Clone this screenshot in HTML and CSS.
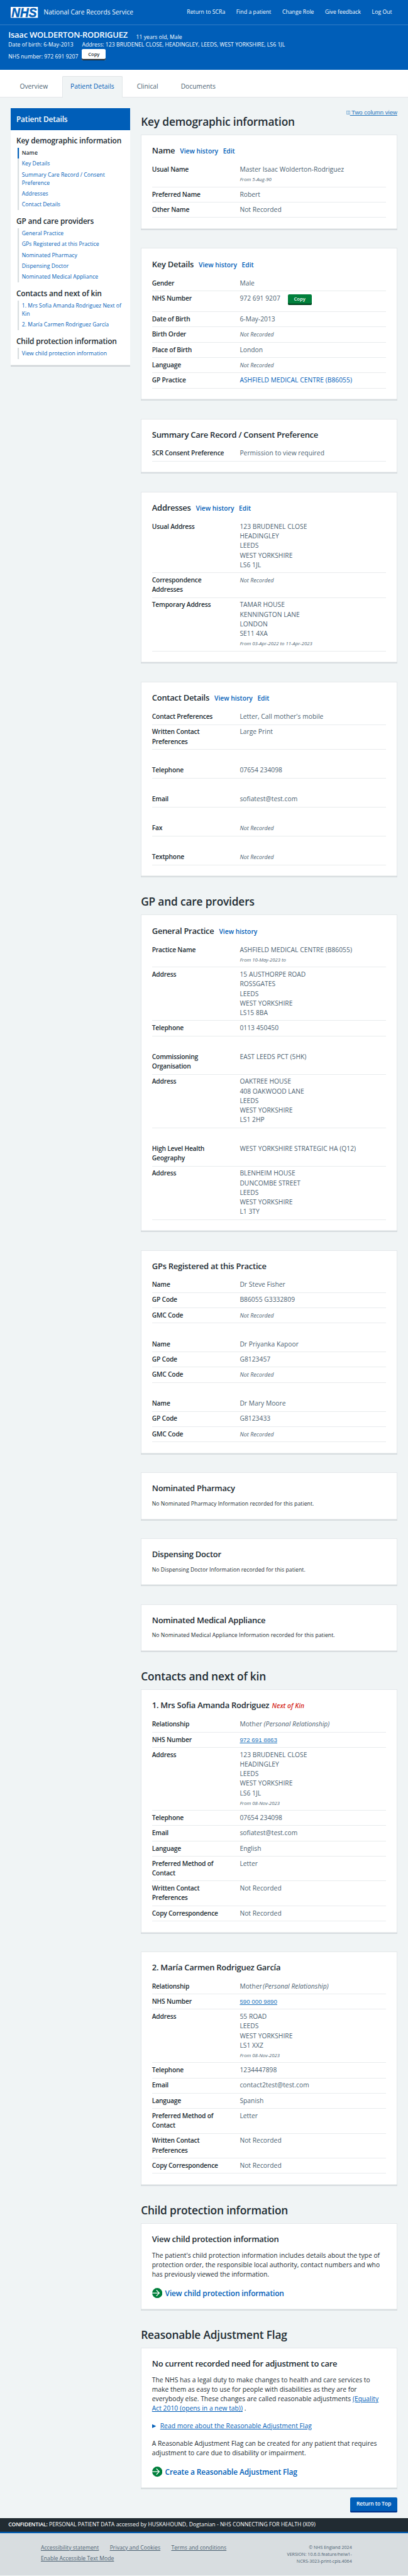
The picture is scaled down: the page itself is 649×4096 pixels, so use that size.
FILE: index.html
```html
<!DOCTYPE html>
<html lang="en">
<head>
<meta charset="utf-8">
<title>Patient Details - National Care Records Service</title>
<link rel="stylesheet" href="styles.css">
</head>
<body>
<header class="banner">
  <div class="service">
    <svg class="logo" viewBox="0 0 80 32" role="img" aria-label="NHS"><rect width="80" height="32" fill="#fff"/><text x="2.5" y="29.3" textLength="74" lengthAdjust="spacingAndGlyphs" class="logo-text">NHS</text></svg>
    <span class="service-name">National Care Records Service</span>
    <nav class="service-nav">
      <a>Return to SCRa</a><a>Find a patient</a><a>Change Role</a><a>Give feedback</a><a>Log Out</a>
    </nav>
  </div>
  <div class="patient">
    <div class="patient-title"><span class="patient-name">Isaac WOLDERTON-RODRIGUEZ</span><span class="patient-age">11 years old, Male</span></div>
    <div class="patient-grid">
      <span>Date of birth: 6-May-2013</span><span>Address: 123 BRUDENEL CLOSE, HEADINGLEY, LEEDS, WEST YORKSHIRE, LS6 1JL</span>
      <span class="patient-nhs">NHS number: 972 691 9207</span><button class="btn btn-white">Copy</button>
    </div>
  </div>
</header>
<nav class="tabs">
  <a class="tab">Overview</a><a class="tab tab-active">Patient Details</a><a class="tab">Clinical</a><a class="tab">Documents</a>
</nav>
<div class="layout">
  <aside class="side">
    <div class="side-head">Patient Details</div>
    <h3 class="side-title">Key demographic information</h3>
    <ul class="side-list">
      <li class="current">Name</li>
      <li>Key Details</li>
      <li>Summary Care Record / Consent<br>Preference</li>
      <li>Addresses</li>
      <li>Contact Details</li>
    </ul>
    <h3 class="side-title">GP and care providers</h3>
    <ul class="side-list">
      <li>General Practice</li>
      <li>GPs Registered at this Practice</li>
      <li>Nominated Pharmacy</li>
      <li>Dispensing Doctor</li>
      <li>Nominated Medical Appliance</li>
    </ul>
    <h3 class="side-title">Contacts and next of kin</h3>
    <ul class="side-list">
      <li>1. Mrs Sofia Amanda Rodriguez Next of<br>Kin</li>
      <li>2. María Carmen Rodriguez García</li>
    </ul>
    <h3 class="side-title">Child protection information</h3>
    <ul class="side-list">
      <li>View child protection information</li>
    </ul>
  </aside>
  <main class="main">
    <div class="section-head first">
      <h2>Key demographic information</h2>
      <a class="view-link"><svg class="view-icon" viewBox="0 0 11 11"><path d="M.6.6h9.8v9.8H.6zM5.5.6v9.8" fill="none" stroke="#2073bc" stroke-width="1"/></svg> Two column view</a>
    </div>

    <section class="card">
      <h3 class="card-title">Name <a>View history</a><a>Edit</a></h3>
      <dl class="rows">
        <div><dt>Usual Name</dt><dd>Master Isaac Wolderton-Rodriguez<br><small>From 5-Aug-90</small></dd></div>
        <div><dt>Preferred Name</dt><dd>Robert</dd></div>
        <div><dt>Other Name</dt><dd>Not Recorded</dd></div>
      </dl>
    </section>

    <section class="card">
      <h3 class="card-title">Key Details <a>View history</a><a>Edit</a></h3>
      <dl class="rows">
        <div><dt>Gender</dt><dd>Male</dd></div>
        <div class="row-copy"><dt>NHS Number</dt><dd>972 691 9207 <button class="btn btn-green">Copy</button></dd></div>
        <div><dt>Date of Birth</dt><dd>6-May-2013</dd></div>
        <div><dt>Birth Order</dt><dd><i>Not Recorded</i></dd></div>
        <div><dt>Place of Birth</dt><dd>London</dd></div>
        <div><dt>Language</dt><dd><i>Not Recorded</i></dd></div>
        <div><dt>GP Practice</dt><dd><a class="plain">ASHFIELD MEDICAL CENTRE (B86055)</a></dd></div>
      </dl>
    </section>

    <section class="card">
      <h3 class="card-title">Summary Care Record / Consent Preference</h3>
      <dl class="rows">
        <div><dt>SCR Consent Preference</dt><dd>Permission to view required</dd></div>
      </dl>
    </section>

    <section class="card">
      <h3 class="card-title">Addresses <a>View history</a><a>Edit</a></h3>
      <dl class="rows">
        <div><dt>Usual Address</dt><dd>123 BRUDENEL CLOSE<br>HEADINGLEY<br>LEEDS<br>WEST YORKSHIRE<br>LS6 1JL</dd></div>
        <div><dt>Correspondence Addresses</dt><dd><i>Not Recorded</i></dd></div>
        <div><dt>Temporary Address</dt><dd>TAMAR HOUSE<br>KENNINGTON LANE<br>LONDON<br>SE11 4XA<br><small>From 03-Apr-2022 to 11-Apr-2023</small></dd></div>
      </dl>
    </section>

    <section class="card">
      <h3 class="card-title">Contact Details <a>View history</a><a>Edit</a></h3>
      <dl class="rows">
        <div><dt>Contact Preferences</dt><dd>Letter, Call mother's mobile</dd></div>
        <div><dt>Written Contact Preferences</dt><dd>Large Print</dd></div>
      </dl>
      <dl class="rows"><div><dt>Telephone</dt><dd>07654 234098</dd></div></dl>
      <dl class="rows"><div><dt>Email</dt><dd>sofiatest@test.com</dd></div></dl>
      <dl class="rows"><div><dt>Fax</dt><dd><i>Not Recorded</i></dd></div></dl>
      <dl class="rows"><div><dt>Textphone</dt><dd><i>Not Recorded</i></dd></div></dl>
    </section>

    <div class="section-head"><h2>GP and care providers</h2></div>

    <section class="card">
      <h3 class="card-title">General Practice <a>View history</a></h3>
      <dl class="rows">
        <div><dt>Practice Name</dt><dd>ASHFIELD MEDICAL CENTRE (B86055)<br><small>From 10-May-2023 to</small></dd></div>
        <div><dt>Address</dt><dd>15 AUSTHORPE ROAD<br>ROSSGATES<br>LEEDS<br>WEST YORKSHIRE<br>LS15 8BA</dd></div>
        <div><dt>Telephone</dt><dd>0113 450450</dd></div>
      </dl>
      <dl class="rows">
        <div><dt>Commissioning Organisation</dt><dd>EAST LEEDS PCT (5HK)</dd></div>
        <div><dt>Address</dt><dd>OAKTREE HOUSE<br>408 OAKWOOD LANE<br>LEEDS<br>WEST YORKSHIRE<br>LS1 2HP</dd></div>
      </dl>
      <dl class="rows">
        <div><dt>High Level Health Geography</dt><dd>WEST YORKSHIRE STRATEGIC HA (Q12)</dd></div>
        <div><dt>Address</dt><dd>BLENHEIM HOUSE<br>DUNCOMBE STREET<br>LEEDS<br>WEST YORKSHIRE<br>L1 3TY</dd></div>
      </dl>
    </section>

    <section class="card">
      <h3 class="card-title">GPs Registered at this Practice</h3>
      <dl class="rows">
        <div><dt>Name</dt><dd>Dr Steve Fisher</dd></div>
        <div><dt>GP Code</dt><dd>B86055 G3332809</dd></div>
        <div><dt>GMC Code</dt><dd><i>Not Recorded</i></dd></div>
      </dl>
      <dl class="rows">
        <div><dt>Name</dt><dd>Dr Priyanka Kapoor</dd></div>
        <div><dt>GP Code</dt><dd>G8123457</dd></div>
        <div><dt>GMC Code</dt><dd><i>Not Recorded</i></dd></div>
      </dl>
      <dl class="rows">
        <div><dt>Name</dt><dd>Dr Mary Moore</dd></div>
        <div><dt>GP Code</dt><dd>G8123433</dd></div>
        <div><dt>GMC Code</dt><dd><i>Not Recorded</i></dd></div>
      </dl>
    </section>

    <section class="card">
      <h3 class="card-title">Nominated Pharmacy</h3>
      <p class="note">No Nominated Pharmacy Information recorded for this patient.</p>
    </section>
    <section class="card">
      <h3 class="card-title">Dispensing Doctor</h3>
      <p class="note">No Dispensing Doctor Information recorded for this patient.</p>
    </section>
    <section class="card">
      <h3 class="card-title">Nominated Medical Appliance</h3>
      <p class="note">No Nominated Medical Appliance Information recorded for this patient.</p>
    </section>

    <div class="section-head"><h2>Contacts and next of kin</h2></div>

    <section class="card">
      <h3 class="card-title">1. Mrs Sofia Amanda Rodriguez <em>Next of Kin</em></h3>
      <dl class="rows">
        <div><dt>Relationship</dt><dd>Mother <i class="big">(Personal Relationship)</i></dd></div>
        <div><dt>NHS Number</dt><dd><a class="number">972 691 8863</a></dd></div>
        <div><dt>Address</dt><dd>123 BRUDENEL CLOSE<br>HEADINGLEY<br>LEEDS<br>WEST YORKSHIRE<br>LS6 1JL<br><small>From 08-Nov-2023</small></dd></div>
        <div><dt>Telephone</dt><dd>07654 234098</dd></div>
        <div><dt>Email</dt><dd>sofiatest@test.com</dd></div>
        <div><dt>Language</dt><dd>English</dd></div>
        <div><dt>Preferred Method of Contact</dt><dd>Letter</dd></div>
        <div><dt>Written Contact Preferences</dt><dd>Not Recorded</dd></div>
        <div><dt>Copy Correspondence</dt><dd>Not Recorded</dd></div>
      </dl>
    </section>

    <section class="card">
      <h3 class="card-title">2. María Carmen Rodriguez García</h3>
      <dl class="rows">
        <div><dt>Relationship</dt><dd>Mother<i class="big close">(Personal Relationship)</i></dd></div>
        <div><dt>NHS Number</dt><dd><a class="number">590 000 9890</a></dd></div>
        <div><dt>Address</dt><dd>55 ROAD<br>LEEDS<br>WEST YORKSHIRE<br>LS1 XXZ<br><small>From 08-Nov-2023</small></dd></div>
        <div><dt>Telephone</dt><dd>1234447898</dd></div>
        <div><dt>Email</dt><dd>contact2test@test.com</dd></div>
        <div><dt>Language</dt><dd>Spanish</dd></div>
        <div><dt>Preferred Method of Contact</dt><dd>Letter</dd></div>
        <div><dt>Written Contact Preferences</dt><dd>Not Recorded</dd></div>
        <div><dt>Copy Correspondence</dt><dd>Not Recorded</dd></div>
      </dl>
    </section>

    <div class="section-head"><h2>Child protection information</h2></div>

    <section class="card">
      <h3 class="card-title">View child protection information</h3>
      <p class="text">The patient's child protection information includes details about the type of<br>protection order, the responsible local authority, contact numbers and who<br>has previously viewed the information.</p>
      <a class="action"><svg class="arrow" viewBox="0 0 30 30"><circle cx="15" cy="15" r="15" fill="#007f3b"/><path d="M0 15h21M12.500 6.500l8.500 8.500l-8.500 8.500" fill="none" stroke="#fff" stroke-width="2.300"/></svg>View child protection information</a>
    </section>

    <div class="section-head"><h2>Reasonable Adjustment Flag</h2></div>

    <section class="card">
      <h3 class="card-title">No current recorded need for adjustment to care</h3>
      <p class="text">The NHS has a legal duty to make changes to health and care services to<br>make them as easy to use for people with disabilities as they are for<br>everybody else. These changes are called reasonable adjustments <a>(Equality<br>Act 2010 (opens in a new tab))</a> .</p>
      <div class="more"><svg class="triangle" viewBox="0 0 12 14"><path d="M0 1.500v11l12-5.500z" fill="#005eb8"/></svg><a>Read more about the Reasonable Adjustment Flag</a></div>
      <p class="text">A Reasonable Adjustment Flag can be created for any patient that requires<br>adjustment to care due to disability or impairment.</p>
      <a class="action"><svg class="arrow" viewBox="0 0 30 30"><circle cx="15" cy="15" r="15" fill="#007f3b"/><path d="M0 15h21M12.500 6.500l8.500 8.500l-8.500 8.500" fill="none" stroke="#fff" stroke-width="2.300"/></svg>Create a Reasonable Adjustment Flag</a>
    </section>

    <button class="btn btn-top">Return to Top</button>
  </main>
</div>
<div class="confidential"><b>CONFIDENTIAL:</b> PERSONAL PATIENT DATA accessed by HUSKAHOUND, Dogtanian - NHS CONNECTING FOR HEALTH (X09)</div>
<footer class="footer">
  <div class="footer-links">
    <a>Accessibility statement</a><a>Privacy and Cookies</a><a>Terms and conditions</a><a>Enable Accessible Text Mode</a>
  </div>
  <div class="footer-meta">© NHS England 2024<br>VERSION: 10.6.0.feature/heiw1-<br>NCRS-3023-print-cpis.4064</div>
</footer>
</body>
</html>
```
FILE: styles.css
```css
html { font-size: 5.412px; }
* { box-sizing: border-box; margin: 0; padding: 0; }
body {
  font-family: "Open Sans", "Noto Sans", sans-serif;
  font-size: 1.9rem;
  line-height: 2.8rem;
  letter-spacing: .003em;
  color: #212b32;
  background: #f0f4f5;
}
ul { list-style: none; }
button { font-family: inherit; border: 0; }

/* Header */
.banner { height: 20.6rem; background: #005eb8; color: #fff; }
.service {
  display: flex;
  align-items: center;
  height: 7.3rem;
  padding: 0 4.7rem 0 3.2rem;
  box-shadow: inset 0 -1px rgba(255, 255, 255, .2);
}
.logo { width: 8rem; height: 3.2rem; flex: none; overflow: visible; }
.logo-text {
  font: italic bold 36.500px "Liberation Sans", Arial, sans-serif;
  letter-spacing: 0;
  fill: #005eb8;
  stroke: #005eb8;
  stroke-width: 1;
}
.service-name { margin-left: 1.65rem; font-size: 1.88rem; white-space: nowrap; }
.service-nav {
  display: flex;
  gap: 3.25rem;
  margin-left: auto;
  font-size: 1.6rem;
  white-space: nowrap;
}
.patient { padding: 1.47rem 2.45rem 0; font-size: 1.6rem; line-height: 2.4rem; white-space: nowrap; }
.patient-title { display: flex; gap: 2.5rem; height: 3.2rem; margin-bottom: .11rem; }
.patient-name { font-size: 2.4rem; line-height: 3.2rem; font-weight: 600; letter-spacing: -.018em; }
.patient-age { padding-top: .96rem; }
.patient-grid { display: grid; grid-template-columns: 21.65rem 1fr; }
.patient-nhs { padding-top: 1.03rem; }

.btn {
  display: block;
  height: 3.1rem;
  width: 7rem;
  border-radius: .4rem;
  color: #fff;
  font-size: 1.4rem;
  font-weight: 600;
  line-height: 2.7rem;
  padding-bottom: .4rem;
  text-align: center;
}
.btn-white { height: 3.2rem; color: #212b32; background: #fff; box-shadow: inset 0 -.4rem #212b32; }
.btn-green { background: #007f3b; box-shadow: inset 0 -.4rem #00401e; }
.btn-top {
  width: 13.8rem;
  height: 4.4rem;
  margin: 2.4rem 0 1.6rem auto;
  font-size: 1.6rem;
  line-height: 4rem;
  letter-spacing: -.02em;
  background: #005eb8;
  box-shadow: inset 0 -.4rem #003087;
}

/* Tabs */
.tabs {
  display: flex;
  align-items: flex-end;
  gap: 1.65rem;
  height: 8rem;
  padding-left: 3.3rem;
  background: #fff;
  box-shadow: inset 0 -1px #e3e7e9;
}
.tab { height: 6.3rem; padding: 0 2.5rem; line-height: 5.92rem; color: #4c6272; white-space: nowrap; }
.tab-active {
  color: #005eb8;
  background: #f0f4f5;
  border-radius: .4rem .4rem 0 0;
  box-shadow: inset 1px 0 #e3e7e9, inset -1px 0 #e3e7e9, inset 0 1px #e0e4e6;
}

/* Two-part layout */
.layout {
  display: grid;
  grid-template-columns: 35rem 1fr;
  column-gap: 3.23rem;
  align-items: start;
  padding: 0 3.16rem 0 3.2rem;
}
.side {
  margin-top: 3.2rem;
  padding-bottom: 2.2rem;
  background: #fff;
  box-shadow: inset 0 -.45rem #d0d5d8;
}
.side-head {
  height: 6.4rem;
  padding-left: 1.6rem;
  background: #005eb8;
  color: #fff;
  font-size: 2.2rem;
  font-weight: 600;
  line-height: 6.4rem;
  letter-spacing: -.014em;
}
.side-title {
  padding: 1.8rem 1.6rem .63rem;
  font-size: 2.2rem;
  font-weight: 600;
  line-height: 2.8rem;
  letter-spacing: -.013em;
  white-space: nowrap;
}
.side-list { margin-left: 2rem; font-size: 1.6rem; line-height: 2.4rem; color: #005eb8; }
.side-list li { padding: .4rem 0 .4rem 1.23rem; box-shadow: inset .4rem 0 #d8dde0; white-space: nowrap; }
.side-list .current { color: #212b32; font-weight: 600; box-shadow: inset .4rem 0 #005eb8; }

/* Section headings */
.section-head { height: 10.9rem; padding-top: 5.16rem; display: flex; justify-content: space-between; }
.section-head h2 { font-size: 3.2rem; font-weight: 600; line-height: 4rem; letter-spacing: -.0095em; }
.view-link {
  margin-top: -2.2rem;
  height: 2.8rem;
  font-family: "Liberation Sans", Arial, sans-serif;
  font-size: 1.77rem;
  letter-spacing: 0;
  color: #2073bc;
  text-decoration: underline;
}
.view-icon { width: 1.1rem; height: 1.1rem; }

/* Cards */
.card {
  padding: 3.17rem 3.25rem 3.65rem;
  background: #fff;
  box-shadow: inset 0 -.45rem #d8dde0, inset 0 0 0 1px #e4e8ea;
}
.card + .card { margin-top: 5.26rem; }
.card-title {
  margin-bottom: 1.68rem;
  font-size: 2.4rem;
  font-weight: 600;
  line-height: 3.2rem;
  letter-spacing: -.02em;
  white-space: nowrap;
}
.card-title a { margin-left: .9rem; font-size: 1.9rem; letter-spacing: 0; color: #005eb8; }
.card-title a + a { margin-left: 1.4rem; }
.card-title em { margin-left: .2rem; font-size: 1.9rem; letter-spacing: 0; color: #d5281b; }

.rows + .rows { margin-top: 4rem; }
.rows > div {
  display: grid;
  grid-template-columns: 22.5rem 1fr;
  column-gap: 3.3rem;
  padding: .71rem 0 .98rem;
  box-shadow: inset 0 -1px #e8ebed;
}
.rows dt { font-weight: 600; letter-spacing: -.02em; }
.rows dd { color: #4c6272; white-space: nowrap; }
.rows small { font-size: 1.42rem; font-style: italic; line-height: 1; }
.rows i { font-size: 1.66rem; line-height: 1; }
.rows i.big { font-size: 1.9rem; }
.rows i.close { margin-left: .2rem; }
.rows .row-copy { height: 6.07rem; }
.row-copy dd { display: flex; gap: 2.2rem; }
.row-copy .btn { margin-top: .13rem; }
.plain { color: #005eb8; }
.number {
  font-family: "Liberation Sans", Arial, sans-serif;
  font-size: 1.8rem;
  line-height: 1;
  letter-spacing: 0;
  color: #2073bc;
  text-decoration: underline;
}

.note { font-size: 1.6rem; line-height: 2.4rem; letter-spacing: .006em; }
.text { line-height: 2.82rem; white-space: nowrap; }
.text a, .more a { color: #005eb8; text-decoration: underline; }
.more { display: flex; align-items: center; gap: 1.2rem; margin: 2.3rem 0 2.4rem; }
.triangle { width: 1.2rem; height: 1.4rem; }
.action {
  display: flex;
  gap: .85rem;
  margin-top: 2.5rem;
  height: 3.03rem;
  font-size: 2.2rem;
  font-weight: 600;
  line-height: 3rem;
  letter-spacing: -.009em;
  color: #005eb8;
  white-space: nowrap;
}
.arrow { width: 3rem; height: 3rem; flex: none; }

/* Footer */
.confidential {
  height: 4.4rem;
  padding-left: 2.45rem;
  background: #212b32;
  box-shadow: inset 0 -.4rem #005eb8;
  color: #fff;
  font-size: 1.6rem;
  line-height: 4rem;
  letter-spacing: .004em;
  white-space: nowrap;
}
.confidential b { font-weight: 600; letter-spacing: -.018em; }
.footer {
  display: flex;
  justify-content: space-between;
  height: 12.45rem;
  padding: 3.15rem 16.5rem 0 12rem;
  background: #d8dde0;
  color: #4c6272;
}
.footer-links {
  display: flex;
  flex-wrap: wrap;
  align-content: flex-start;
  column-gap: 3.2rem;
  row-gap: .83rem;
  width: 60rem;
  font-size: 1.6rem;
  line-height: 2.4rem;
}
.footer-links a { text-decoration: underline; }
.footer-meta { text-align: right; font-size: 1.3rem; line-height: 2.06rem; white-space: nowrap; }
```
